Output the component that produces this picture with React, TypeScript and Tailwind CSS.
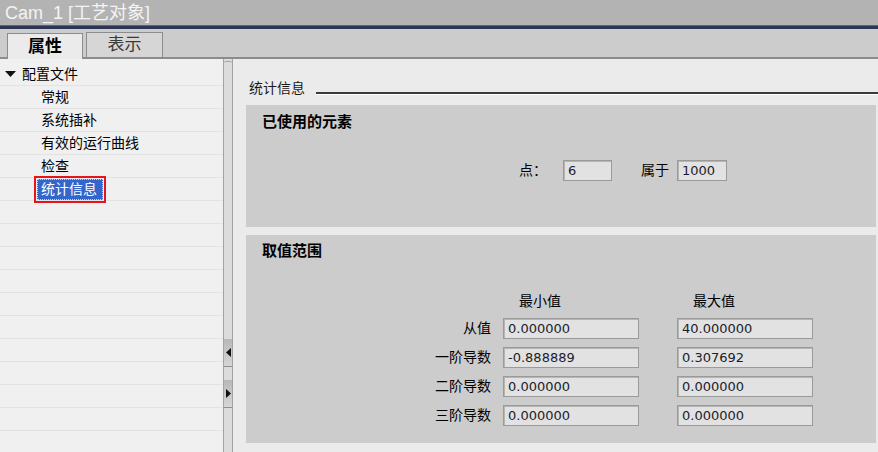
import React from "react";

const CJK = '"Liberation Sans", "Noto Sans CJK SC", sans-serif';
const NUM = '"DejaVu Sans", "Noto Sans CJK SC", sans-serif';

function Field({ value, w }: { value: string; w: string }) {
  return (
    <div
      className={`${w} h-[21px] bg-[#e2e2e2] border border-[#9a9a9a] shadow-[inset_1px_1px_0_#b5b5b5] flex items-center pl-[4px] text-[13px] text-[#1c1c2c] leading-none`}
      style={{ fontFamily: NUM }}
    >
      {value}
    </div>
  );
}

const treeItems = ["常规", "系统插补", "有效的运行曲线", "检查"];

export default function App() {
  const rows = [
    ["从值", "0.000000", "40.000000"],
    ["一阶导数", "-0.888889", "0.307692"],
    ["二阶导数", "0.000000", "0.000000"],
    ["三阶导数", "0.000000", "0.000000"],
  ];
  return (
    <div className="w-[878px] h-[452px] flex flex-col overflow-hidden bg-[#ebebeb]" style={{ fontFamily: CJK }}>
      {/* title bar */}
      <div className="h-[25px] bg-[#b3b3b3] flex items-center pl-[5px] text-[18px] text-[#f4f4f4] leading-none">
        Cam_1 [工艺对象]
      </div>
      <div className="h-[4px] bg-[#2b3553] border-t border-[#5b6682]" />
      {/* tab strip */}
      <div className="h-[30px] bg-[#cccccc] border-b-2 border-[#8c8c8c] flex items-end pl-[7px] gap-[3px]">
        <div className="w-[76px] h-[26px] -mb-[2px] bg-[#ebebeb] border border-b-0 border-[#8c8c8c] flex items-center justify-center text-[17px] font-bold text-black">
          属性
        </div>
        <div className="w-[77px] h-[25px] bg-[#d6d6d6] border border-b-0 border-[#8c8c8c] flex items-center justify-center text-[17px] text-[#3a3a3a]">
          表示
        </div>
      </div>
      {/* main */}
      <div className="flex-1 flex min-h-0">
        {/* left tree */}
        <div className="w-[223px] bg-[#f0f0f0] pt-[4px] flex flex-col overflow-hidden">
          <div className="h-[23px] shrink-0 border-b border-[#e2e2e2] flex items-center text-[14px] text-black">
            <svg width="12" height="8" viewBox="0 0 12 8" className="ml-[5px] mr-[5px]">
              <polygon points="0,1 11,1 5.5,7" fill="#111" />
            </svg>
            配置文件
          </div>
          {treeItems.map((t) => (
            <div key={t} className="h-[23px] shrink-0 border-b border-[#e2e2e2] flex items-center pl-[41px] text-[14px] text-black">
              {t}
            </div>
          ))}
          <div className="h-[23px] shrink-0 border-b border-[#e2e2e2] flex items-center pl-[34px]">
            <div className="border-2 border-[#e8141b] p-px">
              <div className="bg-[#3366cc] border border-dotted border-[#c8d4f0] pl-[3px] pr-[5px] h-[21px] flex items-center text-[14px] text-white">
                统计信息
              </div>
            </div>
          </div>
          {Array.from({ length: 11 }).map((_, i) => (
            <div key={i} className="h-[23px] shrink-0 border-b border-[#e2e2e2]" />
          ))}
        </div>
        {/* splitter */}
        <div className="w-[10px] bg-[#dcdcdc] border-x border-[#a3a3a3] flex flex-col">
          <div className="h-[278px] shrink-0 border-t border-[#a3a3a3] mt-[2px] rounded-t-[2px]" />
          <div className="h-[28px] shrink-0 bg-gradient-to-b from-[#b8b8b8] to-[#d6d6d6] border-b border-[#8f8f8f] flex items-center justify-center">
            <svg width="5" height="9" viewBox="0 0 5 9">
              <polygon points="5,0 5,9 0,4.5" fill="#111" />
            </svg>
          </div>
          <div className="h-[13px] shrink-0" />
          <div className="h-[28px] shrink-0 bg-gradient-to-b from-[#b8b8b8] to-[#d6d6d6] border-b border-[#8f8f8f] flex items-center justify-center">
            <svg width="5" height="9" viewBox="0 0 5 9">
              <polygon points="0,0 0,9 5,4.5" fill="#111" />
            </svg>
          </div>
        </div>
        {/* right pane */}
        <div className="flex-1 bg-[#ebebeb] flex flex-col pt-[19px]">
          <div className="flex items-end pl-[16px] h-[20px]">
            <span className="text-[14px] text-[#1a1a1a] leading-[20px]">统计信息</span>
            <div className="flex-1 ml-[11px] mb-[4px] border-b-2 border-[#3a3a3a] shadow-[0_1px_0_#ffffff]" />
          </div>
          <div className="ml-[13px] mr-[2px] mt-[7px] h-[122px] bg-[#cccccc] pt-[7px] pl-[16px]">
            <div className="text-[15px] font-bold text-black leading-[20px]">已使用的元素</div>
            <div className="flex items-center mt-[28px] pl-[257px] text-[14px] text-black">
              <span className="w-[44px]">点：</span>
              <Field value="6" w="w-[49px]" />
              <span className="ml-[29px] w-[36px]">属于</span>
              <Field value="1000" w="w-[50px]" />
            </div>
          </div>
          <div className="ml-[13px] mr-[2px] mt-[8px] h-[208px] bg-[#cccccc] pt-[6px]">
            <div className="pl-[16px] text-[15px] font-bold text-black leading-[20px]">取值范围</div>
            <div className="flex mt-[30px] h-[20px] items-center text-[14px] text-black">
              <div className="w-[245px]" />
              <div className="ml-[12px] w-[136px] pl-[16px]">最小值</div>
              <div className="ml-[38px] w-[136px] pl-[16px]">最大值</div>
            </div>
            <div className="flex flex-col gap-[8px] mt-[7px]">
              {rows.map(([l, a, b]) => (
                <div key={l} className="flex items-center text-[14px] text-black">
                  <div className="w-[245px] text-right">{l}</div>
                  <div className="ml-[12px]">
                    <Field value={a} w="w-[136px]" />
                  </div>
                  <div className="ml-[38px]">
                    <Field value={b} w="w-[136px]" />
                  </div>
                </div>
              ))}
            </div>
          </div>
        </div>
      </div>
    </div>
  );
}
